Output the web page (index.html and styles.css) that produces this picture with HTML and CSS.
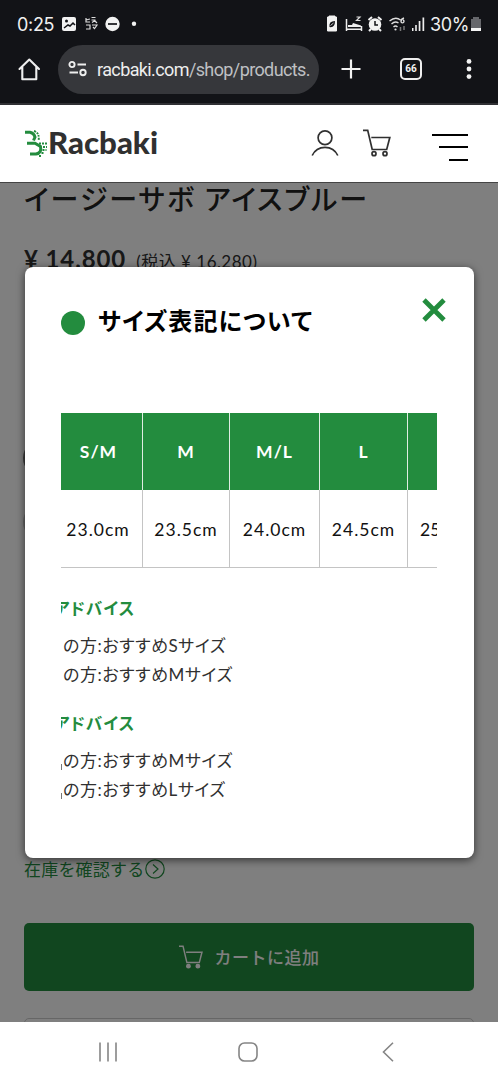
FILE: index.html
```html
<!DOCTYPE html>
<html lang="ja">
<head>
<meta charset="utf-8">
<title>Racbaki</title>
<link rel="stylesheet" href="styles.css">
</head>
<body>
<div class="status">
  <span class="clock">0:25</span>
  <svg class="status-left" width="80" height="20" viewBox="0 0 80 20">
    <rect x="1" y="3" width="14" height="14" rx="2" fill="#f2f2f2"/>
    <circle cx="5.500" cy="7" r="1.500" fill="#121317"/><path d="M3 14l4-3 2 1 3-3 2 2" stroke="#121317" stroke-width="1.500" fill="none"/>
    <g stroke="#ddd" stroke-width="1.200" fill="none"><path d="M25 4v4h4M25 6l4-1M30.500 3.500h4M30.500 6h4M31 8.500l3-2M33 6l3 3M25 11h4v4h-4M31 11h5l-2 3M32 13l2 2"/></g>
    <circle cx="51.500" cy="10" r="7.200" fill="#f2f2f2"/><path d="M47 10h9" stroke="#121317" stroke-width="1.700"/>
    <circle cx="73" cy="9.800" r="2.200" fill="#f2f2f2"/>
  </svg>
  <svg class="status-right" width="100" height="20" viewBox="0 0 100 20">
    <path d="M4 3V2h6v1h1.500v14h-9V3z" fill="#f2f2f2" stroke="#f2f2f2"/><path d="M4.500 13q-1-6 5.500-6q0 7-5.500 6z" fill="#121317"/><path d="M5.500 11.500l3-2.500" stroke="#f2f2f2" stroke-width=".8"/>
    <path d="M21.500 5v12M21.500 15.300h15M36.500 17v-5" stroke="#eee" stroke-width="1.500" fill="none"/><path d="M23 13v-2h4l1-2 8 2.500V13z" fill="#eee"/><path d="M31.500 3h3.500l-3.500 3.500h4" stroke="#ddd" stroke-width="1.200" fill="none"/>
    <circle cx="50" cy="10.500" r="6.300" fill="#f2f2f2"/><path d="M43.500 6l3.500-3M56.500 6l-3.500-3M46 15l-2 2M54 15l2 2" stroke="#f2f2f2" stroke-width="2"/><path d="M50 7v4h3" stroke="#121317" stroke-width="1.500" fill="none"/>
    <g stroke="#ddd" stroke-width="1.400" fill="none"><path d="M64.500 7q6-5 11-1M66.500 10q3.500-3.500 7-1M68.500 13q2-2 4 0M79 4q-3 1-3 3.500a1.500 1.500 0 1 0 2-1.500"/></g><circle cx="70.500" cy="15.500" r="1.100" fill="#ddd"/><path d="M75.500 13v4M79 12v4" stroke="#777" stroke-width="1.500"/>
    <g fill="#eee"><path d="M87 14h1.500v3H87zM90.200 11h1.600v6h-1.600zM93.700 7h1.700v10h-1.700zM97.500 3.500h1.700V17h-1.700z"/></g>
  </svg>
  <span class="percent">30%</span>
  <svg class="battery" width="10" height="15" viewBox="0 0 10 15"><path d="M2 2V0h6v2h2v10H0V2z" fill="#66676b"/><path d="M0 11h10v3H0z" fill="#f5f5f5"/></svg>
</div>
<div class="browser">
  <svg class="home" width="24" height="24" viewBox="0 0 24 24" fill="none" stroke="#eee" stroke-width="2.100" stroke-linejoin="round" stroke-linecap="round"><path d="M2.500 12L12.300 2.500L22 12M5.300 10v12.300h14V10"/></svg>
  <div class="omnibox">
    <svg width="20" height="18" viewBox="0 0 20 18" fill="none" stroke="#eee" stroke-width="1.900"><circle cx="4" cy="4.500" r="2.600"/><path d="M9.500 4.500H18M1.500 12.500H10"/><circle cx="15" cy="12.500" r="2.700"/></svg>
    <span class="url">racbaki.com<i>/shop/products.</i></span>
  </div>
  <svg class="plus" width="20" height="20" viewBox="0 0 20 20"><path d="M10 .5v19M.5 10h19" stroke="#f2f2f2" stroke-width="2.200"/></svg>
  <span class="tabs">66</span>
  <svg class="dots" width="6" height="20" viewBox="0 0 6 20" fill="#f2f2f2"><circle cx="3" cy="2.400" r="2.400"/><circle cx="3" cy="10" r="2.400"/><circle cx="3" cy="17.600" r="2.400"/></svg>
</div>
<header class="site-header">
  <svg class="logo" width="140" height="36" viewBox="0 0 140 36">
    <g fill="none" stroke="#238c3e" stroke-width="3"><path d="M1 6.200H6Q10 7 11 11L9.500 14.500"/><path d="M3 17.300H11L16.500 20.500Q18 27 12 28H6"/></g>
    <g fill="none" stroke="#238c3e" stroke-width="1.900" stroke-dasharray="2 1"><path d="M10 5Q16 7 14.500 15"/><path d="M15 17.500h8M19 21h4M18.500 24h4M17.500 27h3M15 30h3"/></g>
    <text x="24" y="28" class="logo-text" textLength="110" lengthAdjust="spacingAndGlyphs">Racbaki</text>
  </svg>
  <svg class="user" width="28" height="28" viewBox="0 0 28 28" fill="none" stroke="#303030" stroke-width="1.700"><circle cx="14" cy="8.700" r="6.900"/><path d="M1.200 26.500Q5 18.300 14 18.300T26.800 26.500"/></svg>
  <svg class="cart" width="28" height="28" viewBox="0 0 28 28" fill="none" stroke="#303030" stroke-width="1.700"><path d="M0 1.400H4.700L9.200 20.500H23.700L26.800 8.500H8.300"/><circle cx="11" cy="24.700" r="2"/><circle cx="22" cy="24.700" r="2"/></svg>
  <div class="menu"><b></b><b></b><b></b></div>
</header>
<main class="page">
  <h1 class="product">イージーサボ アイスブルー</h1>
  <div class="price"><strong>¥ 14,800</strong><span class="tax">(税込 ¥ 16,280)</span></div>
  <div class="options"><span class="swatch"></span><span class="swatch pale"></span></div>
  <div class="stock"><span>在庫を確認する</span><svg width="20" height="20" viewBox="0 0 20 20" fill="none" stroke="#238c3e" stroke-width="1.200"><circle cx="10" cy="10" r="9.200"/><path d="M8 5.500l5 4.500-5 4.500"/></svg></div>
  <div class="add"><svg width="24" height="24" viewBox="0 0 28 28" fill="none" stroke="#fff" stroke-width="1.700"><path d="M0 1.400H4.700L9.200 20.500H23.700L26.800 8.500H8.300"/><circle cx="11" cy="24.700" r="2" fill="#fff"/><circle cx="22" cy="24.700" r="2" fill="#fff"/></svg><span>カートに追加</span></div>
  <div class="next"></div>
  <div class="overlay"></div>
  <section class="modal">
    <div class="modal-head">
      <span class="bullet"></span><h2>サイズ表記について</h2>
      <svg class="close" width="24" height="24" viewBox="0 0 24 24"><path d="M2 2L22 22M22 2L2 22" stroke="#238c3e" stroke-width="4.800"/></svg>
    </div>
    <div class="scroll">
      <div class="sizes">
        <b>S/M</b><b>M</b><b>M/L</b><b>L</b><b></b>
        <span class="first">23.0cm</span><span>23.5cm</span><span>24.0cm</span><span>24.5cm</span><span class="cut">25</span>
      </div>
      <div class="advice">
        <h3>アドバイス</h3>
        <p>の方:おすすめSサイズ</p>
        <p>の方:おすすめMサイズ</p>
      </div>
      <div class="advice">
        <h3>アドバイス</h3>
        <p class="tick">の方:おすすめMサイズ</p>
        <p class="tick">の方:おすすめLサイズ</p>
      </div>
    </div>
  </section>
</main>
<nav class="system">
  <svg width="20" height="20" viewBox="0 0 20 20" stroke="#858585" stroke-width="1.600"><path d="M2 .5v19M10 .5v19M18 .5v19"/></svg>
  <svg class="nav-home" width="20" height="20" viewBox="0 0 20 20" fill="none" stroke="#858585" stroke-width="1.600"><rect x="1" y="1" width="18" height="18" rx="5.500"/></svg>
  <svg class="nav-back" width="12" height="20" viewBox="0 0 12 20" fill="none" stroke="#858585" stroke-width="1.600"><path d="M11 .8L1.500 10L11 19.200"/></svg>
</nav>
</body>
</html>
```
FILE: styles.css
```css
* { box-sizing: border-box; }
body { margin: 0; width: 498px; height: 1080px; overflow: hidden; background: #fff; font-family: Lato, "Noto Sans CJK JP", sans-serif; }
svg { display: block; flex: none; }
h1, h2, h3, p { margin: 0; white-space: nowrap; }
.status { height: 46px; background: #121317; color: #f0f0f0; display: flex; align-items: center; padding: 2px 16px 0 17px; font: 18px Inter, sans-serif; }
.clock { width: 44px; letter-spacing: -.3px; }
.status-right { margin-left: 184px; }
.percent { margin-left: 5px; width: 41px; letter-spacing: -.3px; }
.battery { margin-top: 1px; }
.browser { height: 59px; background: #121317; border-bottom: 2px solid #303034; display: flex; align-items: center; padding: 0 25px 11px 17px; }
.omnibox { margin-left: 17px; width: 261px; height: 49px; border-radius: 25px; background: #36373b; display: flex; align-items: center; padding-left: 10px; gap: 9px; flex: none; }
.url { width: 214px; white-space: nowrap; color: #eee; font: 18px Roboto, sans-serif; letter-spacing: -.61px; }
.url i { font-style: normal; color: #bfc0c3; }
.plus { margin-left: 22px; }
.tabs { margin-left: 39px; width: 22px; height: 22px; border: 2px solid #eee; border-radius: 5px; color: #f2f2f2; font: bold 10px/18px Roboto, sans-serif; text-align: center; flex: none; }
.dots { margin-left: 44px; }
.site-header { height: 78px; background: #fff; border-bottom: 1px solid #444; display: flex; align-items: center; padding: 0 30px 0 24px; }
.logo-text { font: 900 31px Lato, sans-serif; fill: #303030; }
.user { margin: -2px 0 0 147px; }
.cart { margin: -2px 0 0 24px; }
.menu { margin-left: 41px; margin-top: 7px; width: 36px; height: 27px; display: flex; flex-direction: column; justify-content: space-between; align-items: flex-end; }
.menu b { height: 2px; width: 36px; background: #000; }
.menu b:nth-child(2) { width: 29px; }
.menu b:nth-child(3) { width: 19px; }
.page { position: relative; height: 839px; overflow: hidden; padding: 0 24px; display: flex; flex-direction: column; }
.page > * { flex: none; }
.product { height: 58px; font: 500 28px/30px "Noto Sans CJK JP", sans-serif; letter-spacing: 2.100px; font-feature-settings: "palt"; color: #222; }
.price { height: 36px; display: flex; align-items: baseline; gap: 10px; color: #303030; white-space: nowrap; line-height: 36px; }
.price strong { font-size: 24px; letter-spacing: .9px; }
.tax { font-size: 17px; letter-spacing: .5px; font-weight: 400; }
.options { height: 581px; padding-top: 163px; display: flex; flex-direction: column; gap: 28px; }
.swatch { width: 36px; height: 36px; margin-left: -1px; border: 2px solid #777; border-radius: 18px; flex: none; }
.pale { border-color: #ccc; }
.stock { height: 22px; display: flex; align-items: center; color: #238c3e; font: 17px/22px "Noto Sans CJK JP", sans-serif; letter-spacing: .2px; }
.stock span { width: 121px; white-space: nowrap; }
.add { margin-top: 43px; height: 68px; background: #238c3e; border-radius: 5px; display: flex; align-items: center; justify-content: center; gap: 12px; color: #fff; font: 500 17px "Noto Sans CJK JP", sans-serif; letter-spacing: .5px; }
.add span { padding-bottom: 2px; }
.next { margin-top: 27px; height: 30px; border: 1px solid #ccc; border-radius: 5px; }
.overlay { position: absolute; inset: 0; background: rgba(0,0,0,.5); }
.modal { position: absolute; left: 25px; top: 84px; width: 449px; height: 591px; background: #fff; border-radius: 8px; padding: 36px; box-shadow: 0 2px 9px rgba(0,0,0,.6); }
.modal-head { height: 110px; display: flex; align-items: flex-start; }
.bullet { width: 24px; height: 24px; margin: 7.500px 13px 0 0; border-radius: 50%; background: #238c3e; }
.modal h2 { font: bold 24px/33px "Noto Sans CJK JP", sans-serif; font-feature-settings: "palt"; letter-spacing: 1.150px; color: #000; }
.close { margin: -5px -8px 0 auto; }
.scroll { width: 376px; height: 410px; overflow: hidden; }
.sizes { width: 434px; display: grid; grid-template-columns: 82px 87px 90px 88px 87px; grid-template-rows: 77px 78px; margin-bottom: 27px; text-align: center; }
.sizes b, .sizes span { border-right: 1px solid #c4c4c4; font-size: 17.500px; letter-spacing: 1px; line-height: 78px; }
.sizes b { background: #238c3e; color: #fff; border-right-color: #e0ede2; }
.sizes b:first-child { padding-right: 6px; }
.sizes span { border-bottom: 1px solid #c4c4c4; color: #111; white-space: nowrap; line-height: 80px; }
.sizes .first { padding-right: 7px; }
.sizes .cut { text-align: left; padding-left: 12px; letter-spacing: 0; }
.advice { height: 115px; font-family: Lato, "Noto Sans CJK JP", sans-serif; font-feature-settings: "palt"; }
.advice h3 { font-size: 16.500px; line-height: 28px; height: 36px; margin-left: -7px; letter-spacing: 1.050px; color: #238c3e; }
.advice p { height: 29px; font-size: 17px; line-height: 30px; padding-left: 2px; letter-spacing: .55px; color: #303030; }
.advice .tick { background: linear-gradient(#777, #777) 0 18px / 1px 6px no-repeat; }
.system { height: 58px; background: #fff; display: flex; align-items: center; padding: 2px 0 0 98px; }
.nav-home { margin-left: 120px; }
.nav-back { margin-left: 124px; }
```
